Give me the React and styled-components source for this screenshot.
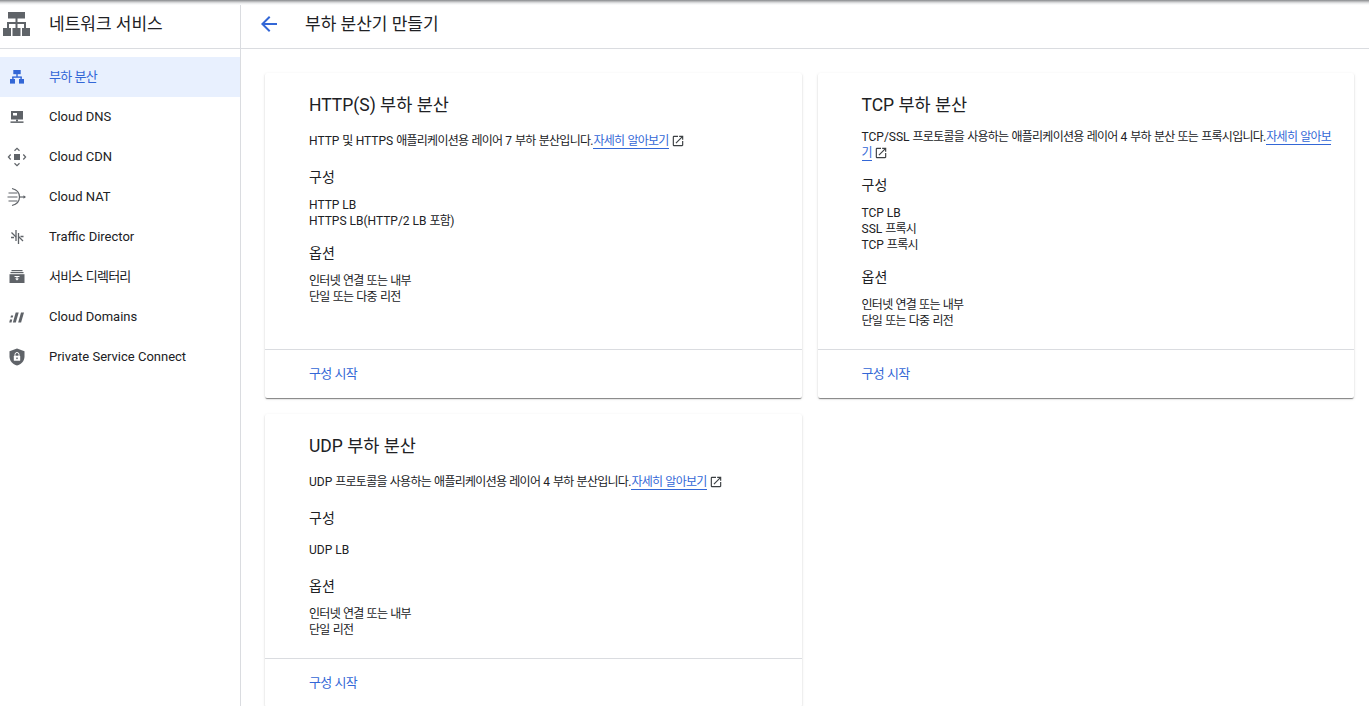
import React from "react";
import styled, { createGlobalStyle } from "styled-components";

const BLUE = "#3367d6";
const GREY = "#5f6368";
const FONT = `Roboto, "Noto Sans CJK KR", sans-serif`;

const GlobalStyle = createGlobalStyle`
  html, body {
    margin: 0;
    height: 100%;
    overflow: hidden;
    background: #fff;
    font-family: ${FONT};
    color: #202124;
  }
`;

const NetworkLogo = () => (
  <svg width="32" height="32" viewBox="0 0 32 32" fill={GREY}>
    <rect x="8" y="4" width="17" height="6.5" />
    <rect x="15.5" y="10" width="2" height="5" />
    <rect x="7" y="14" width="19" height="2" />
    <rect x="7" y="15" width="2" height="5" />
    <rect x="15.5" y="15" width="2" height="5" />
    <rect x="24" y="15" width="2" height="5" />
    <rect x="3" y="20" width="8" height="8" />
    <rect x="12.5" y="20" width="8" height="8" />
    <rect x="22" y="20" width="8" height="8" />
  </svg>
);

const LoadBalanceIcon = ({ color }) => (
  <svg width="16" height="16" viewBox="0 0 16 16" fill={color}>
    <rect x="4.3" y="1" width="7.4" height="4.2" />
    <rect x="7.3" y="5" width="1.4" height="3" />
    <rect x="3.2" y="7.4" width="9.6" height="1.4" />
    <rect x="3.2" y="8" width="1.4" height="2" />
    <rect x="11.4" y="8" width="1.4" height="2" />
    <rect x="1" y="10" width="5" height="4.6" />
    <rect x="10" y="10" width="5" height="4.6" />
  </svg>
);

const DnsIcon = ({ color }) => (
  <svg width="16" height="16" viewBox="0 0 16 16" fill={color}>
    <path d="M2 2h12v8.500H2z" />
    <rect x="4" y="4" width="4" height="2.500" fill="#fff" />
    <rect x="7" y="10.500" width="2" height="2" />
    <rect x="1.500" y="12.400" width="13" height="1.500" />
  </svg>
);

const CdnIcon = ({ color }) => (
  <svg width="20" height="20" viewBox="0 0 20 20" fill="none" stroke={color} strokeWidth="1.2">
    <rect x="7" y="7" width="6" height="6" fill={color} stroke="none" />
    <path d="M7.500 3.700 10 1.400l2.500 2.300" />
    <path d="M7.500 16.300 10 18.600l2.500-2.300" />
    <path d="M3.700 7.500 1.400 10l2.300 2.500" />
    <path d="M16.300 7.500 18.600 10l-2.300 2.500" />
  </svg>
);

const NatIcon = ({ color }) => (
  <svg width="20" height="20" viewBox="0 0 20 20" fill="none" stroke={color} strokeWidth="1.200">
    <path d="M5 1.500c6 1.500 7.500 5 7.500 8.500S11 17 5 18.500" />
    <path d="M1.500 6h9M0.500 10h10M1.500 14h9" />
    <path d="M13 10h5" />
    <path d="M16.500 8.300 19 10l-2.500 1.700z" fill={color} stroke="none" />
  </svg>
);

const DirectorIcon = ({ color }) => (
  <svg width="16" height="16" viewBox="0 0 16 16" fill="none" stroke={color} strokeWidth="1.300">
    <path d="M7 1v11M9.500 4v11" />
    <path d="M2.500 3.500 7 8" />
    <path d="M14 12 9.500 7.500" />
    <path d="M2 8.500h3M11.500 7.500h3" />
  </svg>
);

const DirectoryIcon = ({ color }) => (
  <svg width="16" height="16" viewBox="0 0 16 16" fill={color}>
    <rect x="2.500" y="1" width="11" height="1.200" />
    <rect x="1.500" y="3" width="13" height="1.200" />
    <path d="M.5 5.200h15V14H.5z" />
    <path d="M5.500 7h5v.9h-2v1.600h1.500l-2 2-2-2h1.500V7.900h-2z" fill="#fff" />
  </svg>
);

const DomainsIcon = ({ color }) => (
  <svg width="16" height="16" viewBox="0 0 16 16" fill={color}>
    <path d="M2 6.500h2.200l-.5 2H1.500zM1 10.500h2.200l-.7 3H.2z" />
    <path d="M6.700 3.500h3L6.800 13.500H3.900z" />
    <path d="M12 3.500h3l-2.900 10H9.200z" />
  </svg>
);

const ShieldIcon = ({ color }) => (
  <svg width="16" height="18" viewBox="0 0 16 18" fill={color}>
    <path d="M8 .5 15.500 3.200v5.300c0 4.300-3.100 7.800-7.500 9-4.400-1.200-7.500-4.700-7.500-9V3.200z" />
    <rect x="4.800" y="7.800" width="6.400" height="5" rx=".6" fill="#fff" />
    <path d="M6 8V6.500a2 2 0 0 1 4 0V8" fill="none" stroke="#fff" strokeWidth="1" />
    <rect x="7.300" y="9.500" width="1.400" height="1.600" fill={color} />
  </svg>
);

const ExternalIcon = () => (
  <svg width="14" height="14" viewBox="0 0 24 24" fill="#3c4043">
    <path d="M19 19H5V5h7V3H5a2 2 0 0 0-2 2v14a2 2 0 0 0 2 2h14c1.100 0 2-.9 2-2v-7h-2v7zM14 3v2h3.590l-9.830 9.830 1.410 1.410L19 6.410V10h2V3h-7z" />
  </svg>
);

const BackIcon = () => (
  <svg width="24" height="24" viewBox="0 0 24 24" fill={BLUE}>
    <path d="M20 11H7.830l5.590-5.590L12 4l-8 8 8 8 1.410-1.410L7.830 13H20v-2z" />
  </svg>
);

// hangul runs sit a bit tighter than latin at small sizes
const Kr = ({ children }) =>
  String(children)
    .split(/([가-힣]+)/)
    .map((part, i) => (i % 2 ? <Hangul key={i}>{part}</Hangul> : part));

const navItems = [
  { label: "부하 분산", Icon: LoadBalanceIcon, active: true, raise: 4 },
  { label: "Cloud DNS", Icon: DnsIcon },
  { label: "Cloud CDN", Icon: CdnIcon },
  { label: "Cloud NAT", Icon: NatIcon },
  { label: "Traffic Director", Icon: DirectorIcon },
  { label: "서비스 디렉터리", Icon: DirectoryIcon, raise: 4 },
  { label: "Cloud Domains", Icon: DomainsIcon },
  { label: "Private Service Connect", Icon: ShieldIcon },
];

const Card = ({ title, children, link }) => (
  <CardBox>
    <CardBody>
      <CardTitle>{title}</CardTitle>
      {children}
    </CardBody>
    <CardFooter>
      <StartLink href="#">
        <Kr>{link}</Kr>
      </StartLink>
    </CardFooter>
  </CardBox>
);

const LearnMore = () => (
  <>
    <DocLink href="#">
      <Kr>자세히 알아보기</Kr>
    </DocLink>
    <ExternalWrap>
      <ExternalIcon />
    </ExternalWrap>
  </>
);

const LineList = ({ top, lines }) => (
  <Lines $top={top}>
    {lines.map((line) => (
      <div key={line}>
        <Kr>{line}</Kr>
      </div>
    ))}
  </Lines>
);

export default function App() {
  return (
    <Page>
      <GlobalStyle />
      <TopShade />
      <Sidebar>
        <SideHeader>
          <LogoSlot>
            <NetworkLogo />
          </LogoSlot>
          <SideTitle>네트워크 서비스</SideTitle>
        </SideHeader>
        <NavList>
          {navItems.map(({ label, Icon, active, raise }) => (
            <NavItem key={label} $active={active}>
              <NavIconSlot>
                <Icon color={active ? BLUE : GREY} />
              </NavIconSlot>
              <NavLabel $raise={raise}>
                <Kr>{label}</Kr>
              </NavLabel>
            </NavItem>
          ))}
        </NavList>
      </Sidebar>
      <Main>
        <TopBar>
          <BackSlot>
            <BackIcon />
          </BackSlot>
          <PageTitle>부하 분산기 만들기</PageTitle>
        </TopBar>
        <CardGrid>
          <Card title="HTTP(S) 부하 분산" link="구성 시작">
            <Description $single>
              <Kr>HTTP 및 HTTPS 애플리케이션용 레이어 7 부하 분산입니다.</Kr>
              <LearnMore />
            </Description>
            <SectionTitle>구성</SectionTitle>
            <LineList top={8} lines={["HTTP LB", "HTTPS LB(HTTP/2 LB 포함)"]} />
            <SectionTitle>옵션</SectionTitle>
            <LineList top={8} lines={["인터넷 연결 또는 내부", "단일 또는 다중 리전"]} />
          </Card>
          <Card title="TCP 부하 분산" link="구성 시작">
            <Description>
              <Kr>TCP/SSL 프로토콜을 사용하는 애플리케이션용 레이어 4 부하 분산 또는 프록시입니다.</Kr>
              <LearnMore />
            </Description>
            <SectionTitle>구성</SectionTitle>
            <LineList top={8} lines={["TCP LB", "SSL 프록시", "TCP 프록시"]} />
            <SectionTitle>옵션</SectionTitle>
            <LineList top={8} lines={["인터넷 연결 또는 내부", "단일 또는 다중 리전"]} />
          </Card>
          <Card title="UDP 부하 분산" link="구성 시작">
            <Description $single>
              <Kr>UDP 프로토콜을 사용하는 애플리케이션용 레이어 4 부하 분산입니다.</Kr>
              <LearnMore />
            </Description>
            <SectionTitle>구성</SectionTitle>
            <LineList top={12} lines={["UDP LB"]} />
            <SectionTitle $top={16}>옵션</SectionTitle>
            <LineList top={8} lines={["인터넷 연결 또는 내부", "단일 리전"]} />
          </Card>
        </CardGrid>
      </Main>
    </Page>
  );
}

const Page = styled.div`
  position: relative;
  display: flex;
  width: 100%;
  height: 706px;
  overflow: hidden;
`;

const TopShade = styled.div`
  position: absolute;
  top: 0;
  left: 0;
  right: 0;
  height: 5px;
  background: linear-gradient(#87898c, #b9babc 30%, #e6e7e8 60%, #fff);
`;

const Hangul = styled.span`
  letter-spacing: -0.06em;
`;

const Sidebar = styled.aside`
  flex: 0 0 240px;
  border-right: 1px solid #dadce0;
`;

const SideHeader = styled.div`
  display: flex;
  align-items: center;
  height: 48px;
  border-bottom: 1px solid #dadce0;
`;

const LogoSlot = styled.div`
  display: flex;
  width: 49px;
`;

const SideTitle = styled.div`
  font-size: 17px;
  line-height: 24px;
`;

const NavList = styled.nav`
  padding-top: 8px;
`;

const NavItem = styled.div`
  display: flex;
  align-items: center;
  height: 40px;
  font-size: 13px;
  color: ${(p) => (p.$active ? BLUE : "#202124")};
  background: ${(p) => (p.$active ? "#e8f0fe" : "transparent")};
`;

const NavIconSlot = styled.div`
  display: flex;
  justify-content: center;
  width: 34px;
  margin-right: 15px;
`;

const NavLabel = styled.span`
  padding-bottom: ${(p) => p.$raise ?? 2}px;
`;

const Main = styled.main`
  flex: 1;
  min-width: 0;
`;

const TopBar = styled.header`
  display: flex;
  align-items: center;
  height: 48px;
  border-bottom: 1px solid #dadce0;
`;

const BackSlot = styled.div`
  display: flex;
  padding-left: 16px;
  margin-right: 24px;
`;

const PageTitle = styled.h1`
  margin: 0;
  font-size: 17px;
  font-weight: 400;
  line-height: 24px;
`;

const CardGrid = styled.div`
  display: grid;
  grid-template-columns: 1fr 1fr;
  grid-auto-rows: 325px;
  gap: 16px;
  padding: 24px 15px 0 24px;
`;

const CardBox = styled.section`
  display: flex;
  flex-direction: column;
  background: #fff;
  border-radius: 2px;
  box-shadow: 0 2px 1px -1px rgba(0, 0, 0, 0.3), 0 1px 1px 0 rgba(0, 0, 0, 0.2),
    0 1px 3px 0 rgba(0, 0, 0, 0.12);

  &:nth-child(3) {
    height: 293px;
  }
`;

const CardBody = styled.div`
  flex: 1;
  padding: 20px 20px 0 44px;
`;

const CardTitle = styled.h2`
  margin: 0;
  font-size: 17.5px;
  font-weight: 400;
  line-height: 24px;
`;

const Description = styled.p`
  margin: 12px 0 0;
  padding: ${(p) => (p.$single ? "4px 0" : "0")};
  font-size: 12px;
  line-height: 16px;
`;

const DocLink = styled.a`
  color: ${BLUE};
  text-decoration: none;
  border-bottom: 1px solid ${BLUE};
`;

const ExternalWrap = styled.span`
  display: inline-block;
  margin-left: 2px;
  vertical-align: -3px;
  line-height: 0;
`;

const SectionTitle = styled.h3`
  margin: ${(p) => p.$top ?? 12}px 0 0;
  font-size: 14px;
  font-weight: 400;
  line-height: 24px;
`;

const Lines = styled.div`
  margin-top: ${(p) => p.$top}px;
  font-size: 12px;
  line-height: 16px;
`;

const CardFooter = styled.div`
  flex: 0 0 49px;
  display: flex;
  align-items: center;
  padding: 0 0 3px 44px;
  border-top: 1px solid #dadce0;
  box-sizing: border-box;
`;

const StartLink = styled.a`
  font-size: 13px;
  color: ${BLUE};
  text-decoration: none;
`;
